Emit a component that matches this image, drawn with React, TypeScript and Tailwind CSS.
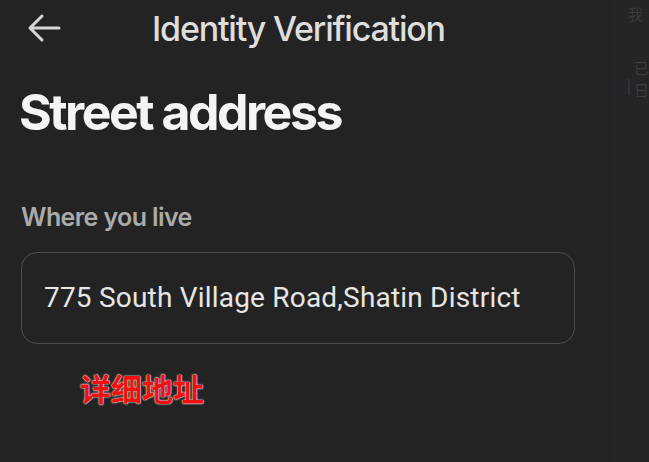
export default function App() {
  return (
    <div className="flex h-[462px] w-[649px] overflow-hidden bg-[#232323] font-['Inter',sans-serif]">
      <div className="flex w-[612px] flex-col">
        <div className="flex h-[56px] items-center">
          <svg className="ml-[27px]" width="34" height="30" viewBox="0 0 34 30" fill="none">
            <path
              d="M15 3 L3 15 L15 27 M3 15 H32"
              stroke="#d6d6d6"
              strokeWidth="3"
              strokeLinecap="round"
              strokeLinejoin="round"
            />
          </svg>
          <h1 className="ml-[91px] text-[34px] font-medium tracking-[-1.2px] text-[#dedede]">
            Identity Verification
          </h1>
        </div>
        <h2 className="ml-[19px] mt-[26px] text-[50px] leading-[60px] font-bold tracking-[-2.5px] text-[#f4f4f4]">
          Street address
        </h2>
        <p className="ml-[21px] mt-[60px] text-[25px] leading-[30px] font-semibold tracking-[-0.6px] text-[#ababab]">
          Where you live
        </p>
        <div className="ml-[21px] mt-[20px] flex h-[92px] w-[554px] items-center rounded-[16px] border border-[#4e4e4e] px-[22px]">
          <span className="font-['Roboto',sans-serif] text-[28px] tracking-[0.2px] text-[#e6e6e6]">
            775 South Village Road,Shatin District
          </span>
        </div>
        <p
          className="ml-[80px] mt-[25px] font-['Noto_Sans_CJK_SC',sans-serif] text-[31px] leading-[38px] font-bold text-[#f01010]"
          style={{ textShadow: "0 0 2px #fff, 0 0 1px #fff" }}
        >
          详细地址
        </p>
      </div>
      <div className="flex flex-1 flex-col bg-[#242526] pl-[16px] font-['Noto_Sans_CJK_SC',sans-serif] text-[15px] leading-[22px] text-[#3a3b3d]">
        <span className="mt-[3px]">我</span>
        <div className="mt-[32px] flex items-start gap-[4px]">
          <div className="mt-[22px] h-[16px] w-[2px] bg-[#2c3440]" />
          <div className="flex flex-col">
            <span>已</span>
            <span>日</span>
          </div>
        </div>
      </div>
    </div>
  );
}
